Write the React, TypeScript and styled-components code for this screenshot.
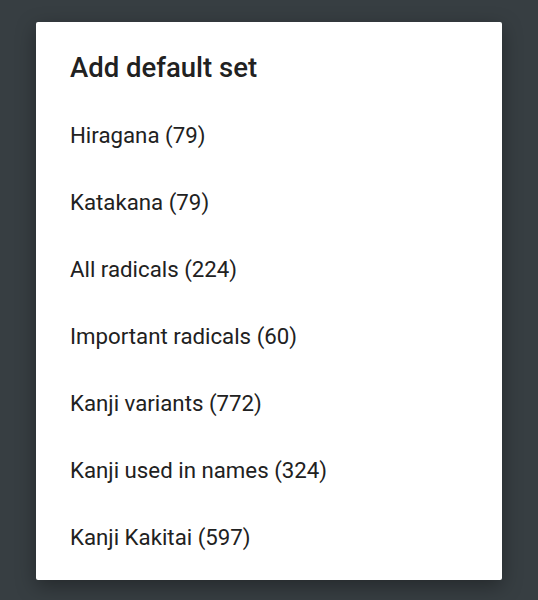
import styled, { createGlobalStyle } from 'styled-components';

const GlobalStyle = createGlobalStyle`
  html, body {
    margin: 0;
    padding: 0;
    background: #373e42;
  }
  body {
    font-family: Roboto, "Noto Sans", sans-serif;
    -webkit-font-smoothing: antialiased;
  }
`;

const Screen = styled.div`
  min-height: 600px;
  padding: 22px 36px 21px;
  box-sizing: border-box;
`;

const Dialog = styled.div`
  background: #ffffff;
  border-radius: 2px;
  padding: 30px 0 10px;
  box-shadow: 0 6px 20px rgba(0, 0, 0, 0.35);
`;

const Title = styled.h2`
  margin: 0 0 17px;
  padding: 0 34px;
  font-size: 27.5px;
  line-height: 32px;
  font-weight: 500;
  color: #212121;
`;

const List = styled.ul`
  list-style: none;
  margin: 0;
  padding: 0;
`;

const Item = styled.li`
  display: flex;
  align-items: center;
  height: 67px;
  padding: 0 34px;
  font-size: 22.25px;
  color: #212121;
  cursor: pointer;

  &:active {
    background: #eeeeee;
  }
`;

const sets = [
  { name: 'Hiragana', count: 79 },
  { name: 'Katakana', count: 79 },
  { name: 'All radicals', count: 224 },
  { name: 'Important radicals', count: 60 },
  { name: 'Kanji variants', count: 772 },
  { name: 'Kanji used in names', count: 324 },
  { name: 'Kanji Kakitai', count: 597 },
];

const App = () => {
  return (
    <Screen>
      <GlobalStyle />
      <Dialog>
        <Title>Add default set</Title>
        <List>
          {sets.map((s) => (
            <Item key={s.name}>
              {s.name} ({s.count})
            </Item>
          ))}
        </List>
      </Dialog>
    </Screen>
  );
};

export default App;
